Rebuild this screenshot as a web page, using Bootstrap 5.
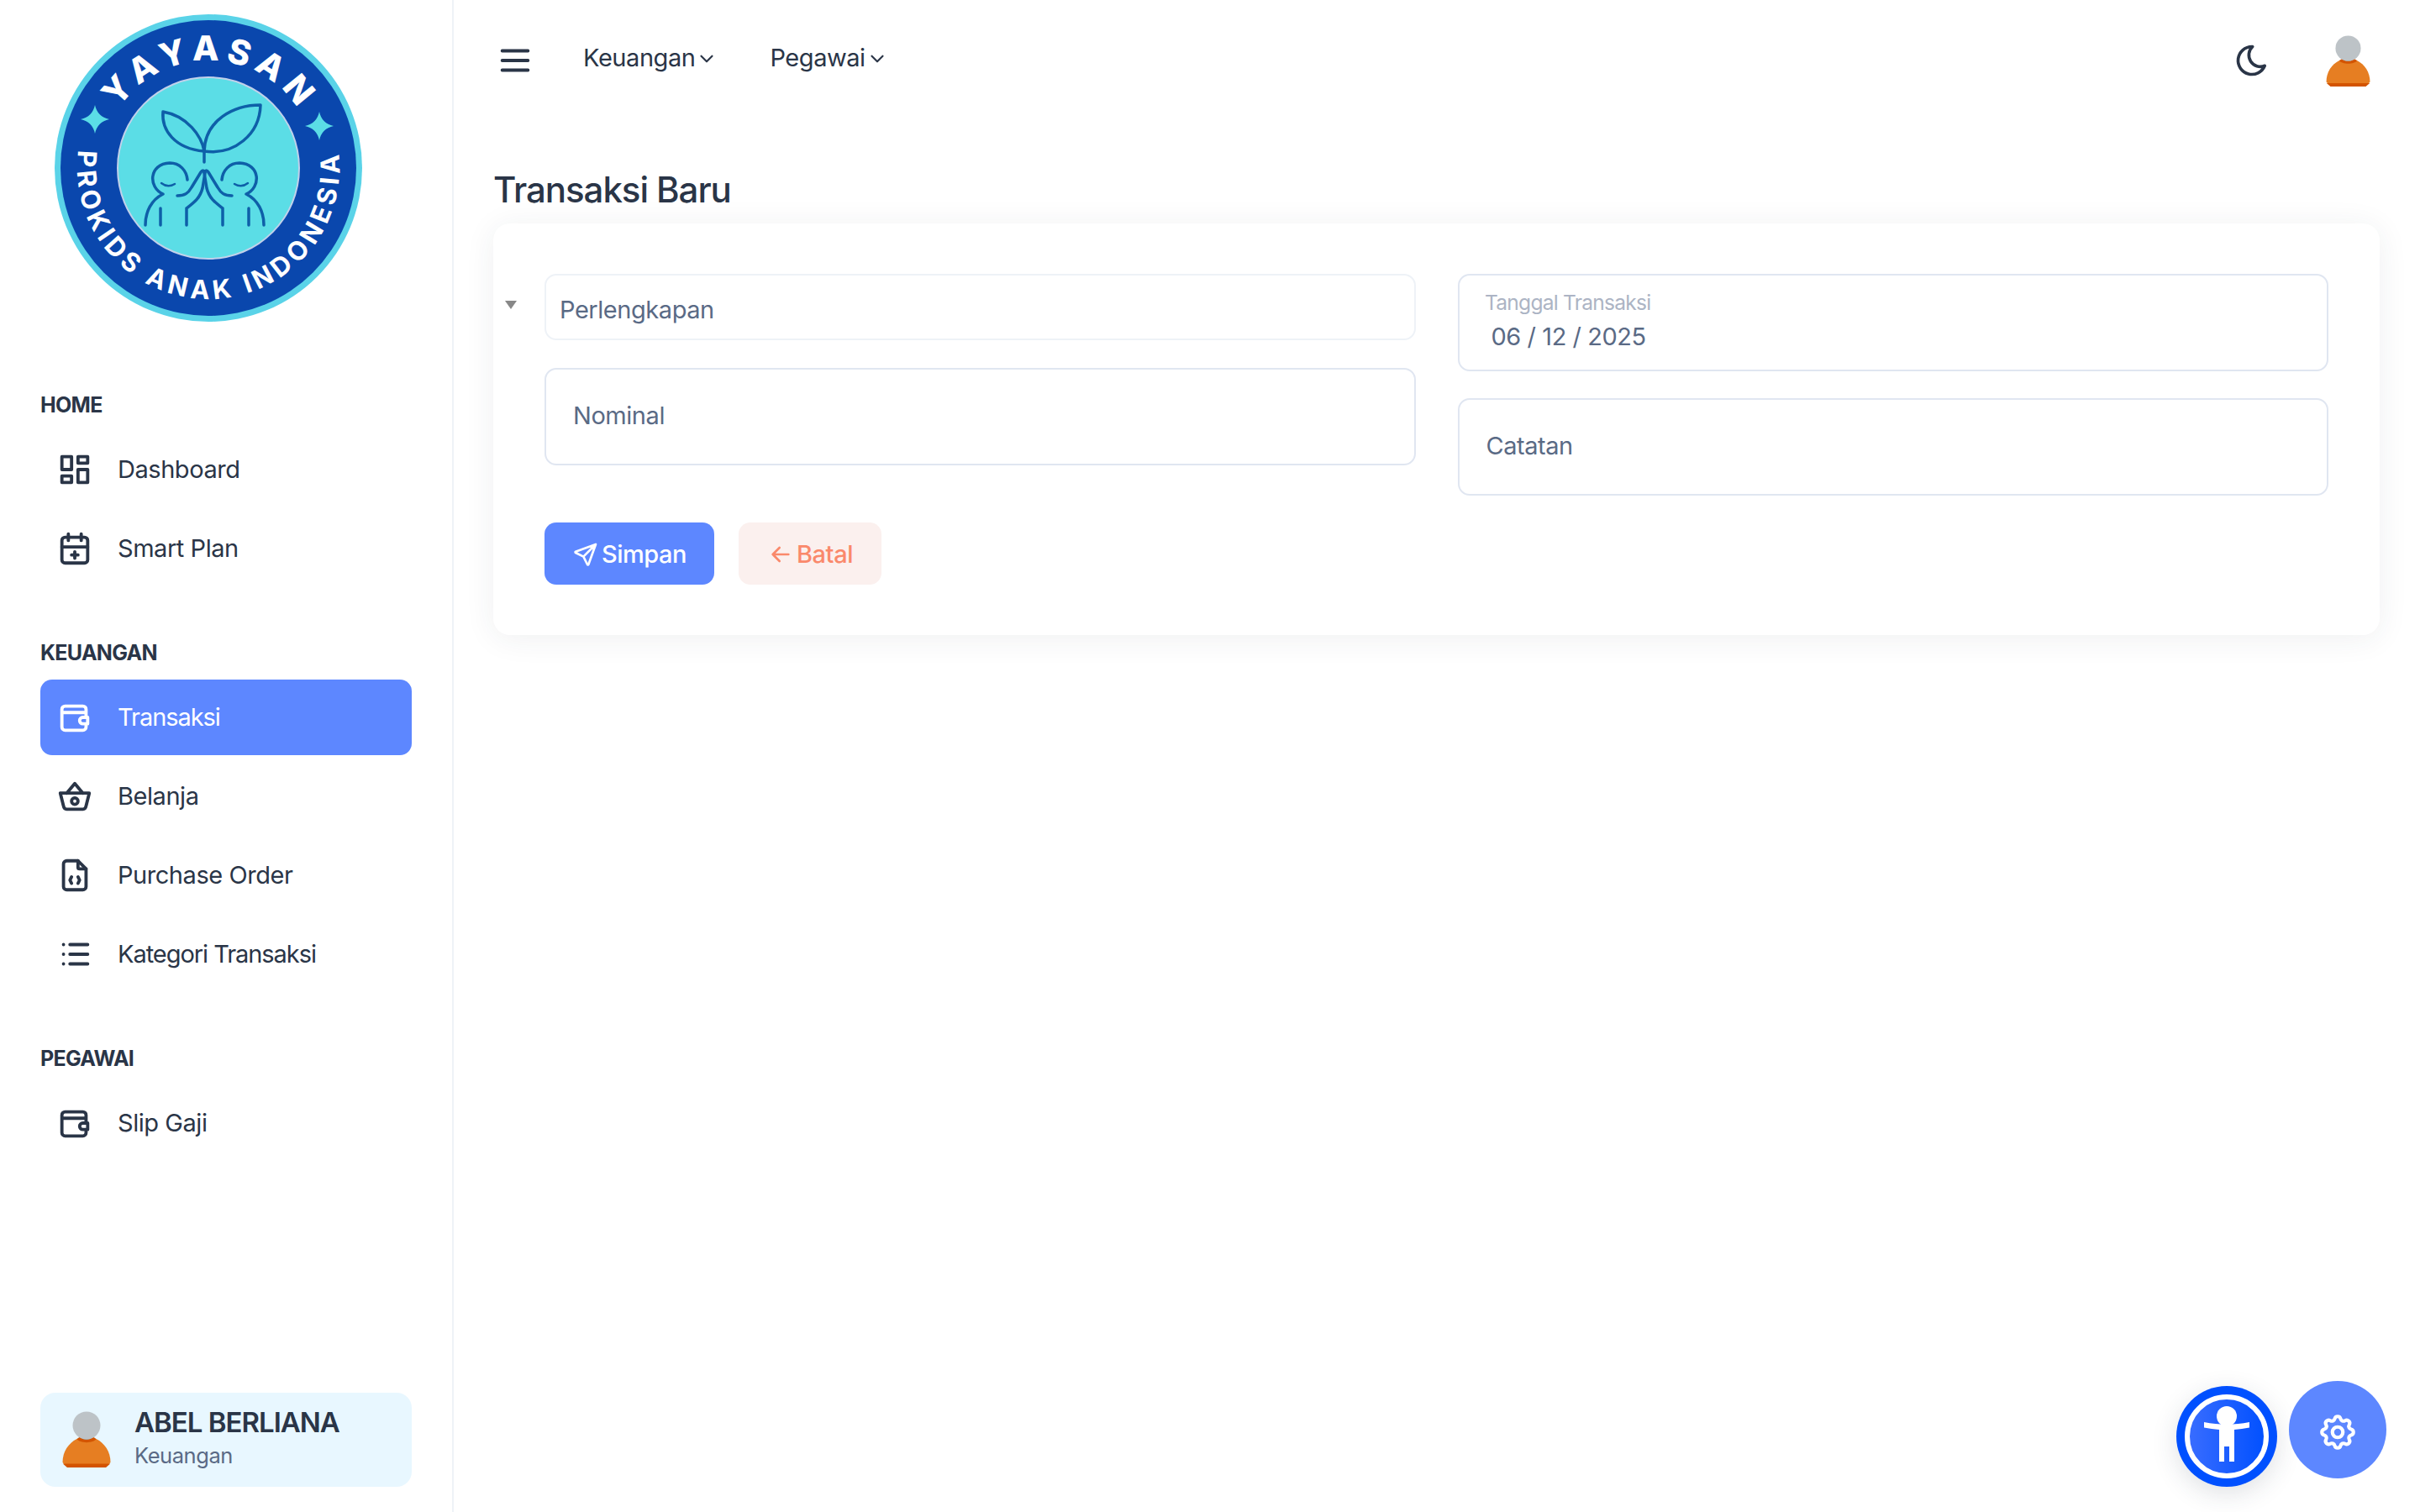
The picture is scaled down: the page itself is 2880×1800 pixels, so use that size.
<!DOCTYPE html>
<html lang="id">
<head>
<meta charset="utf-8">
<title>Transaksi Baru</title>
<link href="https://cdn.jsdelivr.net/npm/bootstrap@5.3.0/dist/css/bootstrap.min.css" rel="stylesheet">
<style>
:root { --ink:#2a3547; --muted:#5a6a85; --accent:#5d87ff; }
html, body { height:100%; }
body { font-family:"Inter","Noto Sans",sans-serif; color:var(--ink); background:#fff; letter-spacing:-.45px; }
.ico { fill:none; stroke:currentColor; stroke-width:2; stroke-linecap:round; stroke-linejoin:round; flex:none; }
.side { width:540px; height:1800px; border-right:2px solid #eef2f7; padding:0 48px 30px 48px; }
.logo-wrap { height:400px; margin-left:-48px; margin-bottom:65px; }
.logo-wrap svg { display:block; }
.sec-title { font-size:25px; font-weight:700; line-height:34px; margin:0 0 15px; height:34px; letter-spacing:-.7px; }
.sec-gap { margin-top:58px; }
.side-link { display:flex; align-items:center; height:90px; margin-bottom:4px; padding-left:18px; border-radius:14px; font-size:29px; color:var(--ink); text-decoration:none; }
.side-link .ico { width:46px; height:46px; margin-right:28px; }
.side-link.on { background:var(--accent); color:#fff; }
.lbl-tight { letter-spacing:-1.05px; }
.user-box { background:#e8f7ff; border-radius:18px; height:112px; padding-left:26px; }
.user-ava { margin-right:28px; flex:none; }
.user-name { font-size:33px; font-weight:600; line-height:40px; letter-spacing:-1px; margin-top:-4px; }
.user-role { font-size:25.5px; color:var(--muted); line-height:36px; margin-top:2px; }
.top { height:140px; padding:0 59px 0 50px; }
.top-burger { width:46px; height:46px; margin:4px 58px 0 0; }
.top-link { font-size:29px; color:var(--ink); text-decoration:none; display:flex; align-items:center; margin-top:-3px; }
.top-link + .top-link { margin-left:62px; }
.top-link .ico { width:26px; height:26px; margin:3px 0 0 1px; }
.top-moon { width:44px; height:44px; margin:4px 66px 0 auto; }
.top-ava { margin-top:6px; flex:none; }
.page-title { font-size:42px; font-weight:500; line-height:60px; margin:56px 0 0; letter-spacing:-1.05px; }
.content { padding:0 48px 0 47px; }
.tx-card { position:relative; border:0; border-radius:20px; padding:60px 61px; box-shadow:0 4px 36px rgba(42,53,71,.075); margin-top:10px; }
.tri { position:absolute; left:14px; top:92px; width:0; height:0; border-left:7px solid transparent; border-right:7px solid transparent; border-top:10px solid #888; }
.tx-row { --bs-gutter-x:50px; }
.fld.form-control { font-size:29px; color:var(--muted); border:2px solid #e0e6f1; border-radius:14px; height:116px; padding:0 33px 3px 32px; letter-spacing:-.45px; }
.fld.form-control::placeholder { color:var(--muted); opacity:1; }
.fld-sel.form-control { height:79px; padding:5px 17px 0 16px; border-color:#eef2f7; margin-bottom:33px; }
.fld-cat.form-control { margin-top:32px; }
.tx-float { height:116px; }
.tx-float > .form-control.fld { height:116px; min-height:116px; padding:33px 0 0 38px; }
.tx-float > label { padding:0; font-size:29px; color:#808da5; top:16px; left:32px; height:auto; border:0; transform-origin:0 0; transform:scale(.85); letter-spacing:-.95px; }
.tx-float > .form-control:not(:placeholder-shown) ~ label { transform:scale(.85); color:#808da5; }
.tx-float > .form-control:not(:placeholder-shown) ~ label::after { display:none; }
.tx-actions { margin-top:32px; }
.tx-btn { height:74px; border:0; border-radius:14px; font-size:29px; font-weight:500; display:inline-flex; align-items:center; justify-content:center; padding:1px 0 0; letter-spacing:-.45px; }
.tx-btn .ico { width:32px; height:32px; margin-right:3px; }
.btn-save, .btn-save:hover { width:202px; background:var(--accent); color:#fff; }
.btn-back, .btn-back:hover { width:170px; background:#fbf0ee; color:#fa896b; margin-left:29px; }
.fab { position:fixed; border-radius:50%; display:flex; align-items:center; justify-content:center; }
.fab-set { right:40px; bottom:40px; width:116px; height:116px; background:var(--accent); color:#fff; }
.fab-set .ico { width:50px; height:50px; margin-top:6px; }
.fab-acc { left:2590px; top:1650px; width:120px; height:120px; background:#0050ff; box-shadow:0 8px 30px rgba(42,53,71,.15); }
</style>
</head>
<body class="overflow-hidden">
<svg width="0" height="0" class="position-absolute">
  <defs>
    <linearGradient id="acc-fill" x1="0" x2="1" y1="0" y2="0"><stop offset="0" stop-color="#3a6dff"/><stop offset="1" stop-color="#0050ff"/></linearGradient>
    <symbol id="i-dash" viewBox="0 0 24 24"><path d="M4 4h6v8h-6z M4 16h6v4h-6z M14 12h6v8h-6z M14 4h6v4h-6z"/></symbol>
    <symbol id="i-cal" viewBox="0 0 24 24"><rect x="4" y="5" width="16" height="16" rx="2"/><path d="M16 3v4 M8 3v4 M4 11h16 M10 16h4 M12 14v4"/></symbol>
    <symbol id="i-wallet" viewBox="0 0 24 24"><path d="M19 12v-5a2 2 0 0 0 -2 -2h-11a2 2 0 0 0 -2 2v11a2 2 0 0 0 2 2h11a2 2 0 0 0 2 -2v-1 M4 9h15"/><path d="M20 12v4h-3a2 2 0 0 1 0 -4h3z"/></symbol>
    <symbol id="i-basket" viewBox="0 0 24 24"><path d="M7 10l5 -6l5 6 M21 10l-2 8a2 2.500 0 0 1 -2 2h-10a2 2.500 0 0 1 -2 -2l-2 -8z"/><circle cx="12" cy="15" r="2"/></symbol>
    <symbol id="i-file" viewBox="0 0 24 24"><path d="M14 3v4a1 1 0 0 0 1 1h4"/><path d="M17 21h-10a2 2 0 0 1 -2 -2v-14a2 2 0 0 1 2 -2h7l5 5v11a2 2 0 0 1 -2 2z"/><path d="M10 13l-1 2l1 2 M14 13l1 2l-1 2"/></symbol>
    <symbol id="i-list" viewBox="0 0 24 24"><path d="M9 6h11 M9 12h11 M9 18h11 M5 6v.01 M5 12v.01 M5 18v.01"/></symbol>
    <symbol id="i-chev" viewBox="0 0 24 24"><path d="M6 9l6 6l6 -6"/></symbol>
    <symbol id="i-avatar" viewBox="0 0 58 68">
      <path d="M0.500 61c0-13 7-23 17-28h23c10 5 17 15 17 28l-6 6h-45z" fill="#e67e22" stroke="none"/>
      <path d="M6 67l-5.200-4.500h56.400l-5.200 4.500z" fill="#d35400" stroke="none"/>
      <path d="M17.500 33c3 5.500 20 5.500 23 0l-3-2h-17z" fill="#d35400" stroke="none"/>
      <path d="M21 30c2 5 14 5 16 0z" fill="#95a5a6" stroke="none"/>
      <circle cx="29" cy="17" r="16.500" fill="#bdc3c7" stroke="none"/>
    </symbol>
    <g id="logo-kid">
      <path d="M173 268c0-16 7-30 21-37c-18-8-17-36 8-37c12 0 20 9 21 20"/>
      <path d="M211 233c9 0 13-3 17-10l11-18c2-3 4-2 5 0"/>
      <path d="M222 268v-20c9-7 16-12 19-24l3-18"/>
      <path d="M191 248v20"/>
      <path d="M192 218c5 4 11 4 16 1" stroke-width="2.500"/>
    </g>
  </defs>
</svg>

<div class="d-flex">
  <aside class="side d-flex flex-column flex-shrink-0">
    <div class="logo-wrap">
      <svg width="490" height="400" viewBox="0 0 490 400" role="img" aria-label="Yayasan Prokids Anak Indonesia">
        <defs>
          <path id="arc-top" d="M120 200a128 128 0 0 1 256 0"/>
          <path id="arc-bot" d="M101.400 146.600A156 156 0 1 0 394.600 146.600"/>
        </defs>
        <circle cx="248" cy="200" r="183" fill="#5ad3e8"/>
        <circle cx="248" cy="200" r="176" fill="#0a47ad"/>
        <circle cx="248" cy="200" r="109" fill="#fff" fill-opacity=".75"/>
        <circle cx="248" cy="200" r="107" fill="#5bdde6"/>
        <g font-family="Inter,'Liberation Sans',sans-serif" font-weight="800" fill="#fff">
          <g transform="rotate(1.500 248 200)"><text font-size="41" letter-spacing="8" text-anchor="middle"><textPath href="#arc-top" startOffset="50%">YAYASAN</textPath></text></g>
          <text font-size="31" font-weight="700" letter-spacing="5.200" text-anchor="middle"><textPath href="#arc-bot" startOffset="50%">PROKIDS ANAK INDONESIA</textPath></text>
        </g>
        <path d="M113 125q3 14 17 17q-14 3-17 17q-3-14-17-17q14-3 17-17z M380 133q3 14 17 17q-14 3-17 17q-3-14-17-17q14-3 17-17z" fill="#5bdde6"/>
        <g fill="none" stroke="#0e5fa8" stroke-width="3.500" stroke-linecap="round" stroke-linejoin="round">
          <path d="M194 133c-2 22 14 44 49 47c-3-18-20-42-49-47z"/>
          <path d="M310 125c-32 0-66 18-67 55c36 5 66-20 67-55z"/>
          <path d="M243 180v13"/>
          <use href="#logo-kid"/>
          <use href="#logo-kid" transform="translate(487 0) scale(-1 1)"/>
        </g>
      </svg>
    </div>

    <div class="sec-title">HOME</div>
    <a class="side-link" href="#"><svg class="ico"><use href="#i-dash"/></svg>Dashboard</a>
    <a class="side-link" href="#"><svg class="ico"><use href="#i-cal"/></svg>Smart Plan</a>

    <div class="sec-title sec-gap">KEUANGAN</div>
    <a class="side-link on lbl-tight" href="#"><svg class="ico"><use href="#i-wallet"/></svg>Transaksi</a>
    <a class="side-link" href="#"><svg class="ico"><use href="#i-basket"/></svg>Belanja</a>
    <a class="side-link" href="#"><svg class="ico"><use href="#i-file"/></svg>Purchase Order</a>
    <a class="side-link lbl-tight" href="#"><svg class="ico"><use href="#i-list"/></svg>Kategori Transaksi</a>

    <div class="sec-title sec-gap">PEGAWAI</div>
    <a class="side-link" href="#"><svg class="ico"><use href="#i-wallet"/></svg>Slip Gaji</a>

    <div class="user-box d-flex align-items-center mt-auto">
      <svg width="58" height="68" class="user-ava"><use href="#i-avatar"/></svg>
      <div>
        <div class="user-name">ABEL BERLIANA</div>
        <div class="user-role">Keuangan</div>
      </div>
    </div>
  </aside>

  <main class="flex-grow-1">
    <header class="top d-flex align-items-center">
      <svg class="ico top-burger" viewBox="0 0 24 24"><path d="M4 6h16 M4 12h16 M4 18h16"/></svg>
      <a class="top-link" href="#">Keuangan<svg class="ico"><use href="#i-chev"/></svg></a>
      <a class="top-link" href="#">Pegawai<svg class="ico"><use href="#i-chev"/></svg></a>
      <svg class="ico top-moon" viewBox="0 0 24 24"><path d="M12 3c.132 0 .263 0 .393 0a7.500 7.500 0 0 0 7.920 12.446a9 9 0 1 1 -8.313 -12.454z"/></svg>
      <svg width="53" height="62" class="top-ava"><use href="#i-avatar"/></svg>
    </header>

    <div class="content">
      <h1 class="page-title">Transaksi Baru</h1>
      <div class="card tx-card">
        <span class="tri"></span>
        <form>
          <div class="row tx-row">
            <div class="col-6">
              <input class="form-control fld fld-sel" type="text" value="Perlengkapan" aria-label="Kategori">
              <input class="form-control fld" type="text" placeholder="Nominal">
            </div>
            <div class="col-6">
              <div class="form-floating tx-float">
                <input class="form-control fld" id="tgl" type="text" value="06 / 12 / 2025">
                <label for="tgl">Tanggal Transaksi</label>
              </div>
              <input class="form-control fld fld-cat" type="text" placeholder="Catatan">
            </div>
          </div>
          <div class="d-flex tx-actions">
            <button type="button" class="btn tx-btn btn-save"><svg class="ico" viewBox="0 0 24 24"><path d="M10 14l11 -11 M21 3l-6.500 18a.55 .55 0 0 1 -1 0l-3.500 -7l-7 -3.500a.55 .55 0 0 1 0 -1l18 -6.500"/></svg>Simpan</button>
            <button type="button" class="btn tx-btn btn-back"><svg class="ico" viewBox="0 0 24 24"><path d="M5 12h14 M5 12l6 6 M5 12l6 -6"/></svg>Batal</button>
          </div>
        </form>
      </div>
    </div>
  </main>
</div>

<div class="fab fab-acc">
  <svg width="120" height="120" viewBox="0 0 120 120">
    <circle cx="60" cy="60" r="47" fill="url(#acc-fill)" stroke="#fff" stroke-width="6"/>
    <circle cx="60" cy="36" r="12" fill="#fff"/>
    <path d="M33 43c18 3.500 36 3.500 54 0v6.500c-6 1-12 2-18 2.500v38h-6v-18h-6v18h-6v-38c-6-.5-12-1.500-18-2.500z" fill="#fff"/>
  </svg>
</div>
<div class="fab fab-set">
  <svg class="ico" viewBox="0 0 24 24"><path d="M10.325 4.317c.426 -1.756 2.924 -1.756 3.350 0a1.724 1.724 0 0 0 2.573 1.066c1.543 -.94 3.310 .826 2.370 2.370a1.724 1.724 0 0 0 1.065 2.572c1.756 .426 1.756 2.924 0 3.350a1.724 1.724 0 0 0 -1.066 2.573c.94 1.543 -.826 3.310 -2.370 2.370a1.724 1.724 0 0 0 -2.572 1.065c-.426 1.756 -2.924 1.756 -3.350 0a1.724 1.724 0 0 0 -2.573 -1.066c-1.543 .94 -3.310 -.826 -2.370 -2.370a1.724 1.724 0 0 0 -1.065 -2.572c-1.756 -.426 -1.756 -2.924 0 -3.350a1.724 1.724 0 0 0 1.066 -2.573c-.94 -1.543 .826 -3.310 2.370 -2.370c1 .608 2.296 .07 2.572 -1.065z"/><circle cx="12" cy="12" r="3"/></svg>
</div>
</body>
</html>
